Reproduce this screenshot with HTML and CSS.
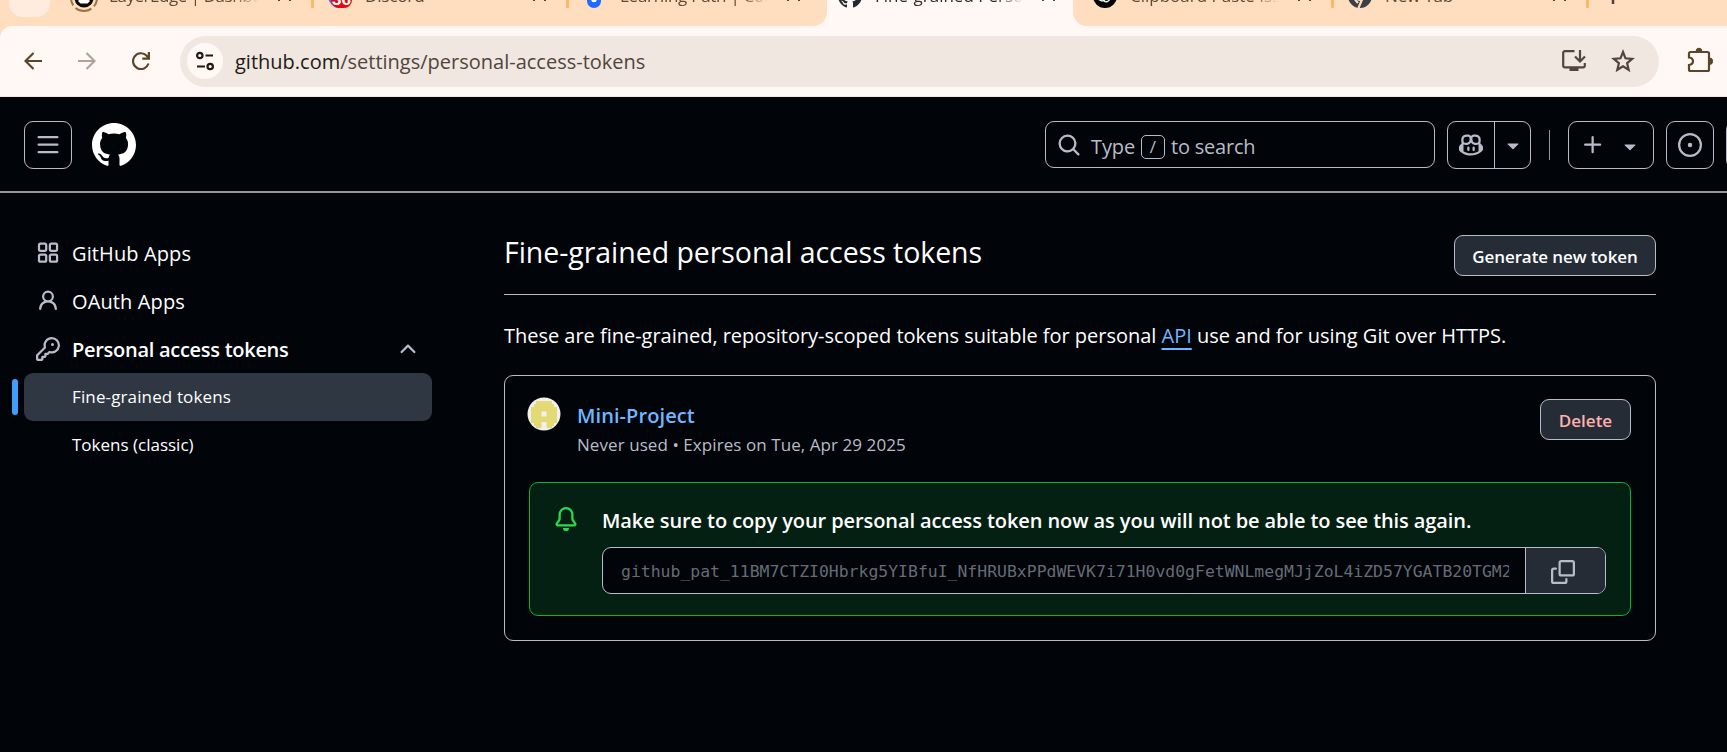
FILE: index.html
```html
<!DOCTYPE html>
<html lang="en">
<head>
<meta charset="utf-8">
<title>Fine-grained Personal Access Tokens</title>
<link rel="stylesheet" href="styles.css">
</head>
<body>
<div class="browser">
  <div class="strip">
    <div class="tabs">
      <div class="group group-left">
        <div class="tab-search"></div>
        <div class="tab tab-layeredge">
          <svg class="fav fav-big" viewBox="0 0 28 28"><circle cx="14" cy="14" r="13" fill="none" stroke="#9a7447" stroke-width="2" stroke-dasharray="17 3.4" stroke-dashoffset="8"/><circle cx="14" cy="14" r="9.5" fill="#0c0c0c"/><path d="M8.500 14.500h11v3l-2 2h-7l-2-2z" fill="#fff"/></svg>
          <span class="tab-title fade t-layer">LayerEdge | Dashbo</span><span class="close"></span><span class="sep"></span>
        </div>
        <div class="tab tab-discord">
          <span class="fav discord"><span class="badge">36</span></span>
          <span class="tab-title t-discord">Discord</span><span class="close"></span><span class="sep"></span>
        </div>
        <div class="tab tab-learning">
          <svg class="fav fav-blue" viewBox="0 0 16 24"><path d="M1 8h14v9a7 7 0 0 1-14 0z" fill="#1f6bff"/><circle cx="8" cy="15.500" r="2.800" fill="#fff"/></svg>
          <span class="tab-title fade t-learning">Learning Path | Coi</span><span class="close"></span>
        </div>
      </div>
      <div class="tab active">
        <svg class="fav" viewBox="1 1 22 22"><path fill="#24292f" d="M12 1C5.9225 1 1 5.9225 1 12C1 16.8675 4.14875 20.9787 8.52125 22.4362C9.07125 22.5325 9.2775 22.2025 9.2775 21.9137C9.2775 21.6525 9.26375 20.7862 9.26375 19.865C6.5 20.3737 5.785 19.1912 5.565 18.5725C5.44125 18.2562 4.905 17.28 4.4375 17.0187C4.0525 16.8125 3.5025 16.3037 4.42375 16.29C5.29 16.2762 5.90875 17.0875 6.115 17.4175C7.105 19.0812 8.68625 18.6137 9.31875 18.325C9.415 17.61 9.70375 17.1287 10.02 16.8537C7.5725 16.5787 5.015 15.63 5.015 11.4225C5.015 10.2262 5.44125 9.23625 6.1425 8.46625C6.0325 8.19125 5.6475 7.06375 6.2525 5.55125C6.2525 5.55125 7.17375 5.2625 9.2775 6.67875C10.1575 6.43125 11.0925 6.3075 12.0275 6.3075C12.9625 6.3075 13.8975 6.43125 14.7775 6.67875C16.8813 5.24875 17.8025 5.55125 17.8025 5.55125C18.4075 7.06375 18.0225 8.19125 17.9125 8.46625C18.6138 9.23625 19.04 10.2125 19.04 11.4225C19.04 15.6437 16.4688 16.5787 14.0213 16.8537C14.42 17.1975 14.7638 17.8575 14.7638 18.8887C14.7638 20.36 14.75 21.5425 14.75 21.9137C14.75 22.2025 14.9563 22.5462 15.5063 22.4362C19.8513 20.9787 23 16.8537 23 12C23 5.9225 18.0775 1 12 1Z"/></svg>
        <span class="tab-title fade">Fine-grained Perso</span><span class="close"></span>
      </div>
      <div class="group group-right">
        <div class="tab tab-clip">
          <svg class="fav" viewBox="0 0 24 24"><circle cx="12" cy="12" r="12" fill="#000"/><g fill="none" stroke="#fff" stroke-width="1.300"><rect x="7" y="5" width="6.500" height="13" rx="3.200" transform="rotate(30 12 12)"/><rect x="9" y="8" width="6.500" height="13" rx="3.200" transform="rotate(90 12 12)"/><rect x="9" y="6" width="6.500" height="13" rx="3.200" transform="rotate(150 12 12)"/></g></svg>
          <span class="tab-title fade">Clipboard Paste Iss</span><span class="close"></span><span class="sep"></span>
        </div>
        <div class="tab tab-new">
          <svg class="fav" viewBox="0 0 24 24"><circle cx="12" cy="12" r="8.500" fill="none" stroke="#3c4043" stroke-width="7"/><path d="M14 15.500 10.500 24M5 13l5 6" stroke="#fedebf" stroke-width="2.200"/></svg>
          <span class="tab-title t-new">New Tab</span><span class="close"></span><span class="sep"></span>
        </div>
        <div class="plus-tab"><svg width="18" height="18" viewBox="0 0 18 18"><path d="M9 1v16M1 9h16" stroke="#4d4336" stroke-width="2.500"/></svg></div>
      </div>
    </div>
  </div>
  <div class="toolbar">
    <svg class="tb tb-back" viewBox="0 0 18 18"><path d="M18 9H2M9.500 1 1.500 9l8 8" fill="none" stroke="#5b4529" stroke-width="2.200"/></svg>
    <svg class="tb tb-fwd" viewBox="0 0 18 18"><path d="M0 9h16M8.500 1l8 8-8 8" fill="none" stroke="#afa29c" stroke-width="2.200"/></svg>
    <svg class="tb tb-reload" viewBox="0 0 18 18"><path d="M16.500 11.500A7.900 7.900 0 1 1 14.500 3.500L16.500 6" fill="none" stroke="#5b4529" stroke-width="2.200"/><path d="M18 0v7.700h-7.700V5.600h5.500V0z" fill="#5b4529"/></svg>
    <div class="omnibox">
      <span class="site"><svg width="18" height="20" viewBox="0 0 18 20"><g fill="none" stroke="#231a12" stroke-width="2.200"><circle cx="3.800" cy="4.500" r="2.700"/><path d="M9.500 4.500H17M1 15.500h8"/><circle cx="14.200" cy="15.500" r="2.700"/></g></svg></span>
      <span class="url"><b>github.com</b>/settings/personal-access-tokens</span>
      <svg class="install" viewBox="0 0 26 24"><path d="M13.500 2.200H3.800a1.600 1.600 0 0 0-1.600 1.600v13a1.600 1.600 0 0 0 1.600 1.600h18.400a1.600 1.600 0 0 0 1.600-1.600V14" fill="none" stroke="#51453c" stroke-width="2.200"/><path d="M8.500 18.500h9V22h-9z" fill="#51453c"/><path d="M19 1v10.500M14 7.500l5 5 5-5" fill="none" stroke="#51453c" stroke-width="2.200"/></svg>
      <svg class="star" viewBox="0 0 24 24"><path d="m12 3 2.500 6.300 6.700.5-5.100 4.400 1.600 6.600-5.700-3.500-5.700 3.500 1.600-6.600-5.100-4.400 6.700-.5z" fill="none" stroke="#51453c" stroke-width="2.200"/></svg>
    </div>
    <svg class="puzzle" viewBox="0 0 26 26"><path d="M3.500 5h17a1.500 1.500 0 0 1 1.500 1.500v16a1.500 1.500 0 0 1-1.500 1.500h-17A1.500 1.500 0 0 1 2 22.500V18c2.500-.3 4-1.700 4-3.700S4.500 10.800 2 10.500v-4A1.500 1.500 0 0 1 3.500 5z" fill="none" stroke="#5b4529" stroke-width="2.200"/><path d="M9 4.500a3 3.300 0 0 1 6 0zM22.500 11a3.100 3.200 0 0 1 0 6.500z" fill="#5b4529" stroke="#5b4529"/></svg>
  </div>
</div>

<header class="header">
  <span class="box menu"><svg class="oct" viewBox="0 0 16 16"><path d="M1 2.75A.75.75 0 0 1 1.75 2h12.500a.75.75 0 0 1 0 1.500H1.750A.75.75 0 0 1 1 2.750Zm0 5A.75.75 0 0 1 1.750 7h12.500a.75.75 0 0 1 0 1.500H1.750A.75.75 0 0 1 1 7.750ZM1.750 12h12.500a.75.75 0 0 1 0 1.500H1.750a.75.75 0 0 1 0-1.500Z"/></svg></span>
  <svg class="mark" viewBox="0 0 24 24"><path fill="#fff" d="M12 1C5.9225 1 1 5.9225 1 12C1 16.8675 4.14875 20.9787 8.52125 22.4362C9.07125 22.5325 9.2775 22.2025 9.2775 21.9137C9.2775 21.6525 9.26375 20.7862 9.26375 19.865C6.5 20.3737 5.785 19.1912 5.565 18.5725C5.44125 18.2562 4.905 17.28 4.4375 17.0187C4.0525 16.8125 3.5025 16.3037 4.42375 16.29C5.29 16.2762 5.90875 17.0875 6.115 17.4175C7.105 19.0812 8.68625 18.6137 9.31875 18.325C9.415 17.61 9.70375 17.1287 10.02 16.8537C7.5725 16.5787 5.015 15.63 5.015 11.4225C5.015 10.2262 5.44125 9.23625 6.1425 8.46625C6.0325 8.19125 5.6475 7.06375 6.2525 5.55125C6.2525 5.55125 7.17375 5.2625 9.2775 6.67875C10.1575 6.43125 11.0925 6.3075 12.0275 6.3075C12.9625 6.3075 13.8975 6.43125 14.7775 6.67875C16.8813 5.24875 17.8025 5.55125 17.8025 5.55125C18.4075 7.06375 18.0225 8.19125 17.9125 8.46625C18.6138 9.23625 19.04 10.2125 19.04 11.4225C19.04 15.6437 16.4688 16.5787 14.0213 16.8537C14.42 17.1975 14.7638 17.8575 14.7638 18.8887C14.7638 20.36 14.75 21.5425 14.75 21.9137C14.75 22.2025 14.9563 22.5462 15.5063 22.4362C19.8513 20.9787 23 16.8537 23 12C23 5.9225 18.0775 1 12 1Z"/></svg>
  <div class="search">
    <svg class="oct search-icon" viewBox="0 0 16 16"><path d="M10.68 11.74a6 6 0 0 1-7.922-8.982 6 6 0 0 1 8.982 7.922l3.04 3.04a.749.749 0 0 1-.326 1.275.749.749 0 0 1-.734-.215ZM11.500 7a4.499 4.499 0 1 0-8.997 0A4.499 4.499 0 0 0 11.500 7Z"/></svg>
    <span class="type">Type</span><kbd>/</kbd><span class="to-search">to search</span>
  </div>
  <div class="box copilot">
    <span class="copilot-main"><svg class="oct" viewBox="0 0 16 16"><path d="M7.998 15.035c-4.562 0-7.873-2.914-7.998-3.749V9.338c.085-.628.677-1.686 1.588-2.065.013-.07.024-.143.036-.218.029-.183.06-.384.126-.612-.201-.508-.254-1.084-.254-1.656 0-.87.128-1.769.693-2.484.579-.733 1.494-1.124 2.724-1.261 1.206-.134 2.262.034 2.944.765.05.053.096.108.139.165.044-.057.094-.112.143-.165.682-.731 1.738-.899 2.944-.765 1.23.137 2.145.528 2.724 1.261.566.715.693 1.614.693 2.484 0 .572-.053 1.148-.254 1.656.066.228.098.429.126.612.012.076.024.148.037.218.924.385 1.522 1.471 1.591 2.095v1.872c0 .766-3.351 3.795-8.002 3.795Zm0-1.485c2.28 0 4.584-1.11 5.002-1.433V7.862l-.023-.116c-.49.21-1.075.291-1.727.291-1.146 0-2.059-.327-2.71-.991A3.222 3.222 0 0 1 8 6.303a3.24 3.24 0 0 1-.544.743c-.65.664-1.563.991-2.71.991-.652 0-1.236-.081-1.727-.291l-.023.116v4.255c.419.323 2.722 1.433 5.002 1.433ZM6.762 2.83c-.193-.206-.637-.413-1.682-.297-1.019.113-1.479.404-1.713.7-.247.312-.369.789-.369 1.554 0 .793.129 1.171.308 1.371.162.181.519.379 1.442.379.853 0 1.339-.235 1.638-.54.315-.322.527-.827.617-1.553.117-.935-.037-1.395-.241-1.614Zm4.155-.297c-1.044-.116-1.488.091-1.681.297-.204.219-.359.679-.242 1.614.091.726.303 1.231.618 1.553.299.305.784.54 1.638.54.922 0 1.28-.198 1.442-.379.179-.2.308-.578.308-1.371 0-.765-.123-1.242-.37-1.554-.233-.296-.693-.587-1.713-.7Z"/><path d="M6.250 9.037a.75.75 0 0 1 .75.75v1.501a.75.75 0 0 1-1.500 0V9.787a.75.75 0 0 1 .75-.75Zm4.250.75v1.501a.75.75 0 0 1-1.500 0V9.787a.75.75 0 0 1 1.500 0Z"/></svg></span>
    <span class="copilot-more"><svg class="oct" viewBox="0 0 16 16"><path d="m4.427 7.427 3.396 3.396a.25.25 0 0 0 .354 0l3.396-3.396A.25.25 0 0 0 11.396 7H4.604a.25.25 0 0 0-.177.427Z"/></svg></span>
  </div>
  <span class="divider"></span>
  <div class="box create">
    <svg class="oct" viewBox="0 0 16 16"><path d="M7.750 2a.75.75 0 0 1 .75.75V7h4.250a.75.75 0 0 1 0 1.500H8.500v4.250a.75.75 0 0 1-1.500 0V8.500H2.750a.75.75 0 0 1 0-1.500H7V2.750A.75.75 0 0 1 7.750 2Z"/></svg>
    <svg class="oct drop" viewBox="0 0 16 16"><path d="m4.427 7.427 3.396 3.396a.25.25 0 0 0 .354 0l3.396-3.396A.25.25 0 0 0 11.396 7H4.604a.25.25 0 0 0-.177.427Z"/></svg>
  </div>
  <span class="box issues"><svg class="oct" viewBox="0 0 16 16"><path d="M8 9.500a1.500 1.500 0 1 0 0-3 1.500 1.500 0 0 0 0 3Z"/><path d="M8 0a8 8 0 1 1 0 16A8 8 0 0 1 8 0ZM1.500 8a6.500 6.500 0 1 0 13 0 6.500 6.500 0 0 0-13 0Z"/></svg></span>
  <span class="box pulls"></span>
</header>

<div class="page">
  <nav class="nav">
    <div class="item"><svg class="oct" viewBox="0 0 16 16"><g fill="none" stroke="#b7bdc8" stroke-width="1.500"><rect x="2" y="1.750" width="4.800" height="4.800" rx="1"/><rect x="9.250" y="1.750" width="4.800" height="4.800" rx="1"/><rect x="2" y="9" width="4.800" height="4.800" rx="1"/><rect x="9.250" y="9" width="4.800" height="4.800" rx="1"/></g></svg><span class="t-ghapps">GitHub Apps</span></div>
    <div class="item"><svg class="oct" viewBox="0 0 16 16"><path d="M10.561 8.073a6.005 6.005 0 0 1 3.432 5.142.75.75 0 1 1-1.498.07 4.500 4.500 0 0 0-8.990 0 .75.75 0 0 1-1.498-.07 6.004 6.004 0 0 1 3.431-5.142 3.999 3.999 0 1 1 5.123 0ZM10.500 5a2.500 2.500 0 1 0-5 0 2.500 2.500 0 0 0 5 0Z"/></svg><span class="t-ghapps">OAuth Apps</span></div>
    <div class="item strong"><svg class="oct" viewBox="0 0 16 16"><path d="M10.500 0a5.499 5.499 0 1 1-1.288 10.848l-.932.932a.749.749 0 0 1-.53.22H7v.75a.749.749 0 0 1-.22.53l-.5.5a.749.749 0 0 1-.53.22H5v.75a.749.749 0 0 1-.22.53l-.5.5a.749.749 0 0 1-.53.22h-2A1.750 1.750 0 0 1 0 14.250v-2c0-.199.079-.389.22-.53l4.932-4.932A5.500 5.500 0 0 1 10.500 0Zm-4 5.500c-.001.431.069.86.205 1.269a.75.75 0 0 1-.181.768L1.500 12.560v1.690c0 .138.112.25.25.25h1.690l.06-.06v-1.190a.75.75 0 0 1 .75-.75h1.190l.06-.06v-1.190a.75.75 0 0 1 .75-.75h1.190l1.023-1.025a.75.75 0 0 1 .768-.18A4 4 0 1 0 6.500 5.500ZM11 6a1 1 0 1 1 0-2 1 1 0 0 1 0 2Z"/></svg><span class="t-pat">Personal access tokens</span><svg class="oct chev" viewBox="0 0 16 16"><path d="M3.220 10.530a.749.749 0 0 1 0-1.060l4.250-4.250a.749.749 0 0 1 1.060 0l4.250 4.250a.749.749 0 1 1-1.060 1.060L8 6.811 4.280 10.530a.749.749 0 0 1-1.060 0Z"/></svg></div>
    <div class="item sub current"><span class="marker"></span><span class="t-fine">Fine-grained tokens</span></div>
    <div class="item sub"><span>Tokens (classic)</span></div>
  </nav>
  <main class="main">
    <div class="head"><h2>Fine-grained personal access tokens</h2><span class="btn generate">Generate new token</span></div>
    <p class="desc">These are fine-grained, repository-scoped tokens suitable for personal <a>API</a> use and for using Git over HTTPS.</p>
    <section class="card">
      <div class="row">
        <svg class="avatar" viewBox="0 0 34 34"><circle cx="17" cy="17" r="16.500" fill="#f0f0f0"/><path d="M9 4h16v3h2v3h3v16h-3v3h-2v2h-5.500v-6h-5v6H9v-2H7v-3H4V10h3V7h2z" fill="#e3d975"/><path d="M14.500 14.500h5v5h-5z" fill="#f0f0f0"/></svg>
        <div class="info"><span class="name">Mini-Project</span><span class="meta">Never used • Expires on Tue, Apr 29 2025</span></div>
        <span class="btn delete">Delete</span>
      </div>
      <div class="flash">
        <svg class="oct bell" viewBox="0 0 16 16"><path d="M8 16a2 2 0 0 0 1.985-1.750c.017-.137-.097-.25-.235-.25h-3.500c-.138 0-.252.113-.235.25A2 2 0 0 0 8 16ZM3 5a5 5 0 0 1 10 0v2.947c0 .05.015.098.042.139l1.703 2.555A1.519 1.519 0 0 1 13.482 13H2.518a1.516 1.516 0 0 1-1.263-2.360l1.703-2.554A.255.255 0 0 0 3 7.947Zm5-3.500A3.500 3.500 0 0 0 4.500 5v2.947c0 .346-.102.683-.294.97l-1.703 2.556a.017.017 0 0 0-.003.01l.001.006c0 .002.002.004.004.006l.006.004.007.001h10.964l.007-.001.006-.004.004-.006.001-.007a.017.017 0 0 0-.003-.01l-1.703-2.554a1.745 1.745 0 0 1-.294-.97V5A3.500 3.500 0 0 0 8 1.500Z"/></svg>
        <div class="flash-body">
          <span class="flash-title">Make sure to copy your personal access token now as you will not be able to see this again.</span>
          <div class="field"><span class="value"><span class="clip">github_pat_11BM7CTZI0Hbrkg5YIBfuI_NfHRUBxPPdWEVK7i71H0vd0gFetWNLmegMJjZoL4iZD57YGATB20TGM2</span></span><span class="copy"><svg class="oct" viewBox="0 0 16 16"><path d="M0 6.750C0 5.784.784 5 1.750 5h1.500a.75.75 0 0 1 0 1.500h-1.500a.25.25 0 0 0-.25.25v7.500c0 .138.112.25.25.25h7.500a.25.25 0 0 0 .25-.25v-1.500a.75.75 0 0 1 1.500 0v1.500A1.750 1.750 0 0 1 9.250 16h-7.500A1.750 1.750 0 0 1 0 14.250Z"/><path d="M5 1.750C5 .784 5.784 0 6.750 0h7.500C15.216 0 16 .784 16 1.750v7.500A1.750 1.750 0 0 1 14.250 11h-7.500A1.750 1.750 0 0 1 5 9.250Zm1.750-.25a.25.25 0 0 0-.25.25v7.500c0 .138.112.25.25.25h7.500a.25.25 0 0 0 .25-.25v-7.500a.25.25 0 0 0-.25-.25Z"/></svg></span></div>
        </div>
      </div>
    </section>
  </main>
</div>
</body>
</html>
```
FILE: styles.css
```css
* { box-sizing: border-box; }
body { margin: 0; width: 1727px; height: 752px; overflow: hidden; background: #010409; color: #fff; font-family: "Open Sans", "Noto Sans", sans-serif; font-size: 20px; }
svg { display: block; flex: none; }
span { white-space: nowrap; }

/* Browser chrome */
.browser { height: 97px; background: #fedebf; }
.strip { height: 26px; overflow: hidden; background: #fff8f4; }
.tabs { display: flex; height: 60px; margin-top: -34px; font-size: 17px; color: #5f4a35; }
.group { display: flex; flex: none; background: #fedebf; }
.group-left { width: 827px; border-bottom-right-radius: 14px; }
.group-right { width: 654px; border-bottom-left-radius: 14px; }
.tab-search { width: 41px; height: 39px; margin: 12px 0 0 9px; border-radius: 14px; background: #ffecde; }
.tab { display: flex; flex: none; align-items: center; height: 60px; }
.fav { flex: none; width: 24px; height: 24px; margin-right: 13px; }
.fav-big { width: 28px; height: 28px; margin: 3px 11px 0 0; }
.fav-blue { width: 16px; margin-right: 18px; }
.tab-title { flex: 1; overflow: hidden; line-height: 24px; }
.fade { -webkit-mask-image: linear-gradient(90deg, #000 82%, transparent 100%); mask-image: linear-gradient(90deg, #000 82%, transparent 100%); }
.t-layer { letter-spacing: -0.45px; }
.t-discord { letter-spacing: -0.15px; }
.t-learning { letter-spacing: -0.27px; }
.t-new { letter-spacing: -0.17px; }
.close { flex: none; width: 13px; height: 13px; margin: 0 20px 3px 19px; background: linear-gradient(45deg, transparent 43%, #51453c 43% 57%, transparent 57%), linear-gradient(-45deg, transparent 43%, #51453c 43% 57%, transparent 57%); }
.sep { flex: none; width: 3px; height: 24px; border-radius: 1px; background: #ffb668; }
.tab-layeredge { width: 264px; padding-left: 20px; }
.tab-discord { width: 255px; padding-left: 14px; }
.tab-learning { width: 258px; padding-left: 17px; }
.tab-learning .close { margin-right: 27px; }
.tab.active { width: 246px; padding-left: 11px; color: #33281f; }
.active .close { margin-right: 18px; }
.tab-clip { width: 261px; padding-left: 20px; }
.tab-new { width: 255px; padding-left: 14px; }
.discord { display: flex; justify-content: flex-end; border-radius: 12px; background: #5865f2; }
.badge { width: 21px; height: 24px; border-radius: 8px; background: #e00b0b; color: #fff; font: bold 17px/32px "Liberation Sans", sans-serif; text-align: center; }
.plus-tab { display: flex; align-items: center; padding-left: 15px; }
.toolbar { display: flex; align-items: center; height: 71px; background: #fff8f4; border-bottom: 1px solid #f3e6da; border-radius: 12px 0 0 0; }
.tb { width: 18px; height: 18px; }
.tb-back { margin-left: 24px; }
.tb-fwd { margin-left: 36px; }
.tb-reload { margin-left: 36px; }
.omnibox { display: flex; flex: none; align-items: center; width: 1479px; height: 51px; margin-left: 30px; padding-left: 7px; border-radius: 26px; background: #f0e7e1; }
.site { display: flex; align-items: center; justify-content: center; width: 36px; height: 36px; margin-right: 12px; border-radius: 18px; background: #fff8f4; }
.url { flex: 1; color: #51453c; font-size: 20px; }
.url b { color: #1f1a14; font-weight: 400; }
.install { width: 26px; height: 24px; margin-right: 24px; }
.star { width: 24px; height: 24px; margin-right: 24px; }
.puzzle { width: 26px; height: 26px; margin: 0 0 2px 28px; }

/* Site header */
.header { display: flex; align-items: center; height: 96px; padding: 2px 0 0 24px; border-bottom: 2px solid #9096a0; overflow: hidden; }
.oct { width: 24px; height: 24px; fill: #b7bdc8; }
.box { display: flex; flex: none; align-items: center; justify-content: center; width: 48px; height: 48px; border: 1px solid #b7bdc8; border-radius: 9px; }
.mark { width: 48px; height: 48px; margin-left: 18px; }
.search { display: flex; flex: none; align-items: center; width: 390px; height: 47px; margin: 0 0 1px 907px; padding-left: 11px; border: 1px solid #b7bdc8; border-radius: 9px; color: #b7bdc8; }
.search-icon { margin-right: 10px; }
.type { margin-top: 3px; letter-spacing: -0.13px; }
.to-search { margin-top: 3px; letter-spacing: -0.2px; }
.search kbd { width: 24px; height: 24px; margin: 4px 6px 0; border: 1px solid #b7bdc8; border-radius: 5px; font: 17px/21px "Open Sans", sans-serif; text-align: center; }
.copilot { width: 84px; margin-left: 12px; }
.copilot-main { display: flex; align-items: center; justify-content: center; width: 48px; height: 46px; border-right: 1px solid #b7bdc8; }
.copilot-more { display: flex; justify-content: center; width: 35px; }
.divider { flex: none; width: 1px; height: 30px; margin: 0 18px; background: #9096a0; }
.create { width: 86px; gap: 13px; }
.drop { margin-top: 2px; }
.issues, .pulls { margin-left: 12px; }

/* Page */
.page { display: flex; }
.nav { width: 408px; margin: 36px 0 0 24px; }
.item { display: flex; align-items: center; height: 48px; padding-left: 12px; border-radius: 9px; }
.item .oct { margin-right: 12px; }
.item.strong { font-weight: 600; }
.item .chev { margin: 0 12px 0 auto; }
.item.sub { padding: 0 0 2px 48px; font-size: 17px; }
.t-ghapps { letter-spacing: 0.12px; }
.t-pat { letter-spacing: -0.28px; }
.t-fine { letter-spacing: 0.13px; }
.current { position: relative; background: #2f3742; }
.marker { position: absolute; left: -12px; top: 6px; width: 6px; height: 36px; border-radius: 3px; background: #409eff; }
.main { width: 1152px; margin: 42px 0 0 72px; }
.head { display: flex; justify-content: space-between; align-items: flex-start; height: 60px; border-bottom: 1px solid #b7bdc8; }
h2 { margin: 0; font-size: 28.5px; font-weight: 400; line-height: 34px; letter-spacing: -0.05px; }
.btn { display: flex; flex: none; align-items: center; justify-content: center; height: 41px; padding-top: 1px; border: 1px solid #b7bdc8; border-radius: 9px; background: #262c36; font-size: 17px; font-weight: 600; }
.generate { width: 202px; letter-spacing: -0.1px; }
.desc { margin: 26px 0 24px; line-height: 30px; letter-spacing: -0.02px; }
.desc a { color: #71b7ff; text-decoration: underline; text-decoration-thickness: 2px; text-underline-offset: 5px; }
.card { height: 266px; padding: 23px 24px 0; border: 1px solid #b7bdc8; border-radius: 9px; }
.row { display: flex; align-items: flex-start; height: 83px; }
.avatar { width: 34px; height: 34px; margin: -2px 16px 0 -2px; }
.info { display: flex; flex: 1; flex-direction: column; }
.name { margin-top: 2px; line-height: 30px; font-weight: 600; color: #71b7ff; letter-spacing: 0.08px; }
.meta { line-height: 28px; font-size: 17px; color: #b7bdc8; letter-spacing: 0.07px; }
.delete { width: 91px; color: #ffb1af; }
.flash { display: flex; gap: 24px; height: 134px; padding: 23px 24px 0; border: 1px solid #09b43a; border-radius: 9px; background: #042013; }
.bell { margin-top: 1px; fill: #2bd853; }
.flash-body { flex: 1; min-width: 0; }
.flash-title { display: block; line-height: 30px; font-weight: 600; letter-spacing: -0.09px; }
.field { display: flex; height: 47px; margin-top: 11px; overflow: hidden; border: 1px solid #b7bdc8; border-radius: 9px; background: #010409; }
.value { flex: 1; min-width: 0; padding: 1px 16px 0 18px; color: #656c76; font: 16.440px/45px "DejaVu Sans Mono", monospace; }
.clip { display: block; overflow: hidden; }
.copy { display: flex; flex: none; align-items: center; justify-content: center; width: 80px; padding: 3px 6px 0 0; border-left: 1px solid #b7bdc8; background: #262c36; }
```
